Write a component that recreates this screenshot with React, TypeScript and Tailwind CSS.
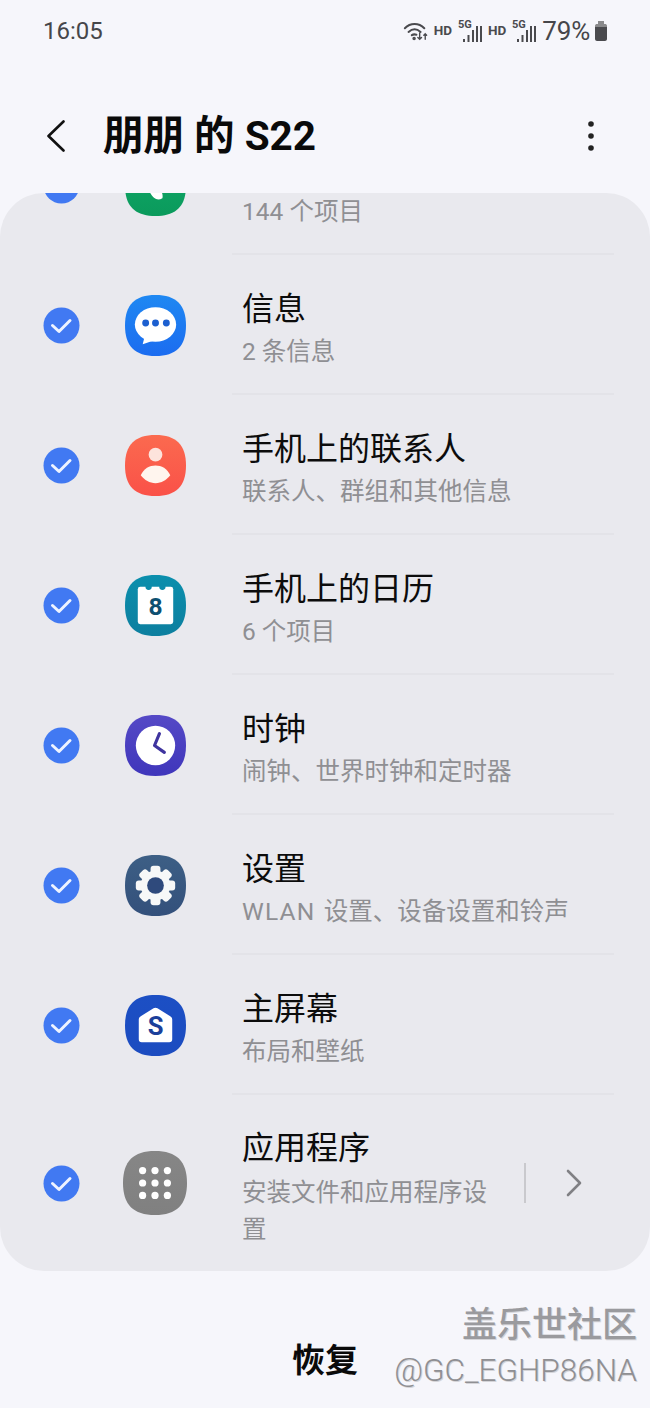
import React from "react";

const SQ = "M31 0C52 0 62 10 62 31C62 52 52 62 31 62C10 62 0 52 0 31C0 10 10 0 31 0Z";

function Squircle({ from, to, id, size = 61, children }: { from: string; to: string; id: string; size?: number; children?: React.ReactNode }) {
  return (
    <svg width={size} height={size} viewBox="0 0 62 62" className="shrink-0">
      <defs>
        <linearGradient id={id} x1="0" y1="0" x2="0" y2="1">
          <stop offset="0" stopColor={from} />
          <stop offset="1" stopColor={to} />
        </linearGradient>
      </defs>
      <path d={SQ} fill={`url(#${id})`} />
      {children}
    </svg>
  );
}

const Phone = () => (
  <Squircle id="g0" from="#0fa968" to="#0b9a5c">
    <path d="M22 30C26 42 31 48 38 44C39 40 37 37 35 33L30 28Z" fill="#fff" />
  </Squircle>
);

const Messages = () => (
  <Squircle id="g1" from="#1f88f2" to="#1b6cf0">
    <ellipse cx="31" cy="30" rx="21" ry="17.500" fill="#fff" />
    <path d="M20 42 L18 50 L30 46Z" fill="#fff" />
    <circle cx="21" cy="28.500" r="3.500" fill="#1c5fd0" />
    <circle cx="31" cy="28.500" r="3.500" fill="#1c5fd0" />
    <circle cx="42" cy="28.500" r="3.500" fill="#1c5fd0" />
  </Squircle>
);

const Contacts = () => (
  <Squircle id="g2" from="#fb6a4f" to="#fa5148">
    <circle cx="31" cy="20" r="7" fill="#fde3dc" />
    <path d="M16 41C19 34 25 31 31 31C37 31 43 34 46 41C42 46 37 49 31 49C25 49 20 46 16 41Z" fill="#fff5ee" />
  </Squircle>
);

const Calendar = () => (
  <Squircle id="g3" from="#0b8fad" to="#0d7f9f">
    <rect x="13" y="12" width="36" height="38" rx="2.500" fill="#fff" />
    <circle cx="24" cy="12" r="3.200" fill="#0b8cab" />
    <circle cx="38" cy="12" r="3.200" fill="#0b8cab" />
    <text x="31" y="41" textAnchor="middle" fontFamily="Roboto, sans-serif" fontWeight="700" fontSize="25" fill="#0e4f70">8</text>
  </Squircle>
);

const Clock = () => (
  <Squircle id="g4" from="#5549c6" to="#3f36bb">
    <circle cx="31" cy="31" r="20" fill="#fff" />
    <path d="M35 19L30 31L40 38" fill="none" stroke="#3f349f" strokeWidth="3.200" strokeLinecap="round" strokeLinejoin="round" />
  </Squircle>
);

const Gear = () => {
  const teeth = [0, 45, 90, 135, 180, 225, 270, 315];
  return (
    <Squircle id="g5" from="#3d5f85" to="#33507b">
      {teeth.map((a) => (
        <rect key={a} x="26" y="11" width="10" height="12" rx="3" fill="#f7f8f8" transform={`rotate(${a} 31 31)`} />
      ))}
      <circle cx="31" cy="31" r="15" fill="#f7f8f8" />
      <circle cx="31" cy="31" r="8.500" fill="#2f4a7c" />
    </Squircle>
  );
};

const Home = () => (
  <Squircle id="g6" from="#1c4fc4" to="#1c4cc0">
    <path d="M14 25C14 23.500 14.500 22.500 16 21.500L29 13.500C30.300 12.700 31.700 12.700 33 13.500L46 21.500C47.500 22.500 48 23.500 48 25V45C48 47 47 48 45 48H17C15 48 14 47 14 45Z" fill="#fff" />
    <text x="31" y="41" textAnchor="middle" fontFamily="Roboto, sans-serif" fontWeight="700" fontSize="26" fill="#1b3f9a">S</text>
  </Squircle>
);

const Apps = () => {
  const p = [19, 31, 43];
  return (
    <Squircle id="g7" from="#868686" to="#808080" size={64}>
      {p.map((y) => p.map((x) => <circle key={`${x}-${y}`} cx={x} cy={y} r="3.500" fill="#fff" />))}
    </Squircle>
  );
};

const Check = () => (
  <svg width="37" height="37" viewBox="0 0 37 37" className="shrink-0">
    <circle cx="18.500" cy="18.500" r="18" fill="#4179f2" />
    <path d="M9.500 18.500L16 24.500L27 13.500" fill="none" stroke="#eef3ff" strokeWidth="3" strokeLinecap="round" strokeLinejoin="round" />
  </svg>
);

type Item = { title: string; sub: React.ReactNode; icon: React.ReactNode };

const items: Item[] = [
  { title: "信息", sub: "2 条信息", icon: <Messages /> },
  { title: "手机上的联系人", sub: "联系人、群组和其他信息", icon: <Contacts /> },
  { title: "手机上的日历", sub: "6 个项目", icon: <Calendar /> },
  { title: "时钟", sub: "闹钟、世界时钟和定时器", icon: <Clock /> },
  {
    title: "设置",
    sub: (
      <>
        <span className="tracking-[1.200px]">WLAN </span>
        <span className="ml-[1px]">设置、设备设置和铃声</span>
      </>
    ),
    icon: <Gear />,
  },
  { title: "主屏幕", sub: "布局和壁纸", icon: <Home /> },
];

function Row({ item }: { item: Item }) {
  return (
    <div className="flex h-[140px] items-center pl-[43px]">
      <Check />
      <div className="ml-[45px]">{item.icon}</div>
      <div className="ml-[46px] mr-[36px] flex h-full flex-1 flex-col border-b-2 border-[#e3e3e8] pl-[10px] pt-[31px]">
        <div className="h-[44px] text-[32px] leading-[46px] text-[#0c0c0c]">{item.title}</div>
        <div className="mt-[5px] text-[24.500px] leading-[34px] text-[#8f8f93]">{item.sub}</div>
      </div>
    </div>
  );
}

const Signal = () => (
  <svg width="24" height="24" viewBox="0 0 24 24" className="shrink-0">
    <text x="0" y="9" fontFamily="Roboto, sans-serif" fontWeight="700" fontSize="11" fill="#4a4a4e">5G</text>
    <g fill="#4a4a4e">
      <rect x="5" y="20" width="2" height="3" />
      <rect x="9.500" y="16" width="2" height="7" />
      <rect x="14" y="11" width="2" height="12" />
      <rect x="18" y="7" width="2" height="16" />
      <rect x="22" y="7" width="2" height="16" />
    </g>
  </svg>
);

const HD = () => <span className="text-[13.500px] font-bold leading-none text-[#4a4a4e]">HD</span>;

export default function App() {
  return (
    <div
      className="relative flex h-[1408px] w-[650px] flex-col overflow-hidden bg-[#f6f6fb]"
      style={{ fontFamily: '"Roboto", "Noto Sans CJK SC", sans-serif' }}
    >
      <div className="flex h-[60px] items-center justify-between pl-[43px] pr-[42px] pt-[2px] text-[24px] text-[#46464a]">
        <span>16:05</span>
        <div className="flex items-center gap-[6px]">
          <svg width="25" height="24" viewBox="0 0 27 24" fill="none" stroke="#4a4a4e" strokeWidth="2.200" strokeLinecap="round">
            <path d="M2 9C8 3 17 3 23 9" />
            <path d="M6 13C10 9.500 15 9.500 19 13" />
            <path d="M9.500 16.500C11 15.500 13 15.500 14.500 16" />
            <circle cx="12" cy="20" r="0.800" fill="#4a4a4e" />
            <path d="M18 14V21M16 19L18 21L20 19" strokeWidth="1.500" />
            <path d="M24 21V15M22.500 16.500L24 15L25.500 16.500" strokeWidth="1.500" />
          </svg>
          <HD />
          <Signal />
          <HD />
          <Signal />
          <span className="text-[26px] leading-none tracking-[-0.200px]">79%</span>
          <svg width="14" height="20" viewBox="0 0 14 20" className="-ml-[2px]">
            <rect x="4" y="0" width="6" height="3" fill="#8a8a8c" />
            <path d="M1 5C1 3.500 2 3 3 3H11C12 3 13 3.500 13 5V6H1Z" fill="#8a8a8c" />
            <path d="M1 6H13V18C13 19 12 20 11 20H3C2 20 1 19 1 18Z" fill="#4a4a4e" />
          </svg>
        </div>
      </div>

      <div className="flex h-[133px] items-center pl-[47px] pr-[56px] pt-[19px]">
        <svg width="18" height="32" viewBox="0 0 18 32" fill="none" stroke="#111" strokeWidth="2.600" strokeLinecap="round" strokeLinejoin="round" className="shrink-0">
          <path d="M16.500 1.500L1.500 16L16.500 30.500" />
        </svg>
        <span className="ml-[38px] flex-1 text-[40.500px] font-bold leading-none text-[#0a0a0a]">朋朋 的 S22</span>
        <svg width="6" height="30" viewBox="0 0 6 30" fill="#222" className="shrink-0">
          <circle cx="3" cy="3" r="2.800" />
          <circle cx="3" cy="15" r="2.800" />
          <circle cx="3" cy="27" r="2.800" />
        </svg>
      </div>

      <div className="h-[1078px] overflow-hidden rounded-[44px] bg-[#e9e9ee]">
        <div className="-mt-[78px]">
          <Row item={{ title: "", sub: "144 个项目", icon: <Phone /> }} />
          {items.map((it) => (
            <Row key={it.title} item={it} />
          ))}
          <div className="flex h-[176px] items-center pl-[43px]">
            <Check />
            <div className="ml-[43px]"><Apps /></div>
            <div className="ml-[55px] flex h-full w-[282px] flex-col pt-[30px]">
              <div className="h-[44px] text-[32px] leading-[46px] text-[#0c0c0c]">应用程序</div>
              <div className="mt-[5px] w-[260px] text-[24.500px] leading-[37px] text-[#8f8f93]">安装文件和应用程序设置</div>
            </div>
            <div className="h-[40px] w-[2px] bg-[#c9c9cd]" />
            <svg width="16" height="28" viewBox="0 0 16 28" fill="none" stroke="#808084" strokeWidth="2.600" strokeLinecap="round" strokeLinejoin="round" className="ml-[40px]">
              <path d="M2 2L14 14L2 26" />
            </svg>
          </div>
        </div>
      </div>

      <div className="flex flex-1 items-start justify-center pt-[73px] text-[33px] font-bold leading-none text-[#0a0a0a]">
        恢复
      </div>

      <div className="absolute right-[13px] top-[1304px] flex flex-col items-end text-[#9a9a9e] [text-shadow:1px_1px_0_#d4d4d8]">
        <span className="text-[35px] font-medium leading-[44px]">盖乐世社区</span>
        <span className="mt-[4px] text-[31.500px] font-light leading-[38px] text-[#8f8f93]">@GC_EGHP86NA</span>
      </div>
    </div>
  );
}
